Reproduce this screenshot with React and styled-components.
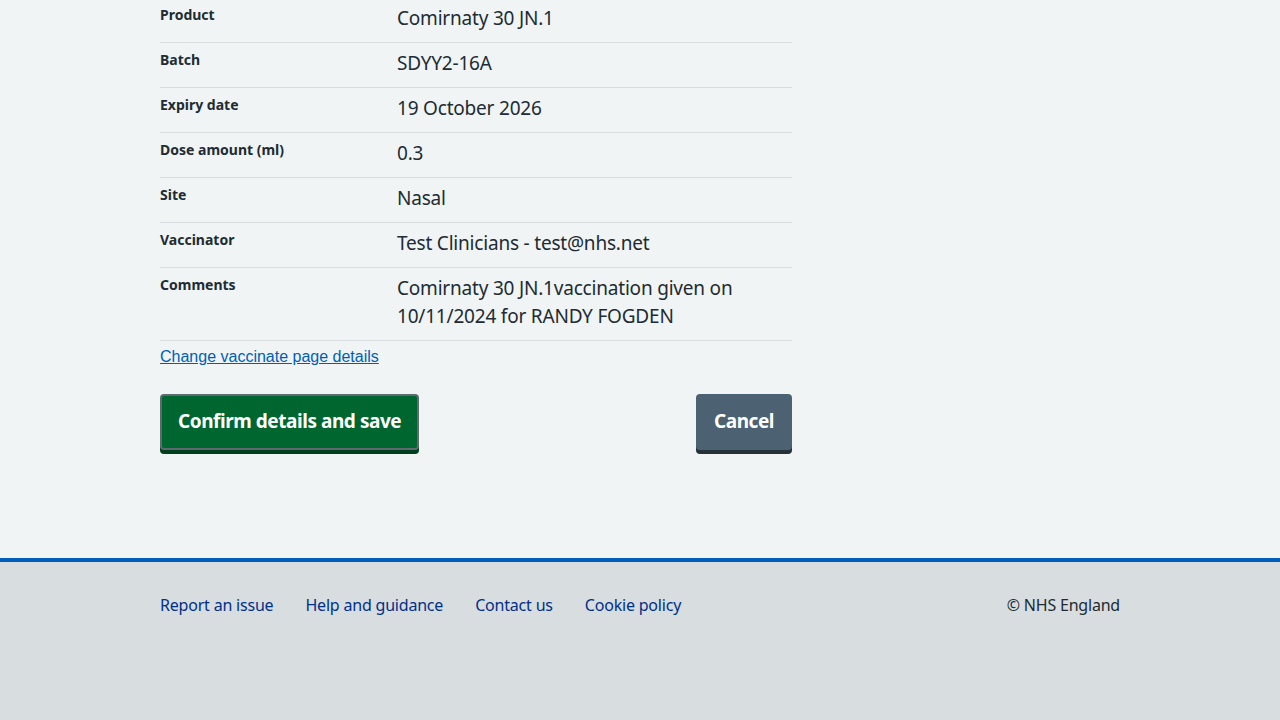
import React from 'react';
import styled, { createGlobalStyle } from 'styled-components';

const GlobalStyle = createGlobalStyle`
  html, body {
    margin: 0;
    padding: 0;
    background: #f0f4f5;
    font-family: "Noto Sans", Arial, sans-serif;
    color: #212b32;
  }
`;

const Page = styled.div`
  min-height: 720px;
  display: flex;
  flex-direction: column;
`;

const Main = styled.main`
  width: 960px;
  margin: 0 auto;
  margin-top: -2px;
  padding-bottom: 108px;
`;

const Content = styled.div`
  width: 632px;
`;

const List = styled.dl`
  margin: 0;
`;

const Row = styled.div`
  display: flex;
  border-bottom: 1px solid #d8dde0;
`;

const Key = styled.dt`
  width: 237px;
  flex-shrink: 0;
  padding: 7px 24px 9px 0;
  box-sizing: border-box;
  font-size: 14px;
  line-height: 20px;
  font-weight: 700;
`;

const Value = styled.dd`
  margin: 0;
  flex: 1;
  padding: 6px 24px 10px 0;
  font-size: 19px;
  line-height: 28px;
  letter-spacing: -0.2px;
`;

const ChangeLink = styled.a`
  display: inline-block;
  margin-top: 6px;
  font-family: "Liberation Sans", Arial, sans-serif;
  font-size: 16px;
  line-height: 20px;
  color: #005eb8;
  text-decoration: underline;
`;

const Actions = styled.div`
  display: flex;
  justify-content: space-between;
  margin-top: 27px;
`;

const Button = styled.button`
  font-family: inherit;
  font-size: 19px;
  font-weight: 700;
  line-height: 24px;
  letter-spacing: -0.45px;
  color: #fff;
  height: 56px;
  padding: 0 16px 3px;
  border-radius: 4px;
  cursor: pointer;
  background: ${p => (p.$secondary ? '#4c6272' : '#00662f')};
  border: 2px solid ${p => (p.$secondary ? 'transparent' : '#5d6b70')};
  box-shadow: 0 4px 0 ${p => (p.$secondary ? '#263139' : '#00401e')};
`;

const Footer = styled.footer`
  margin-top: auto;
  flex: 1;
  background: #d8dde0;
  border-top: 4px solid #005eb8;
`;

const FooterInner = styled.div`
  width: 960px;
  margin: 0 auto;
  padding-top: 31px;
  display: flex;
  justify-content: space-between;
  font-size: 16px;
  line-height: 24px;
  letter-spacing: -0.2px;
`;

const FooterLinks = styled.div`
  display: flex;
  gap: 32px;
`;

const FooterLink = styled.a`
  color: #003087;
  text-decoration: none;
`;

const Copyright = styled.span`
  color: #212b32;
`;

const rows = [
  ['Product', 'Comirnaty 30 JN.1'],
  ['Batch', 'SDYY2-16A'],
  ['Expiry date', '19 October 2026'],
  ['Dose amount (ml)', '0.3'],
  ['Site', 'Nasal'],
  ['Vaccinator', 'Test Clinicians - test@nhs.net'],
  ['Comments', 'Comirnaty 30 JN.1vaccination given on 10/11/2024 for RANDY FOGDEN'],
];

export default function App() {
  return (
    <Page>
      <GlobalStyle />
      <Main>
        <Content>
          <List>
            {rows.map(([k, v]) => (
              <Row key={k}>
                <Key>{k}</Key>
                <Value>{v}</Value>
              </Row>
            ))}
          </List>
          <ChangeLink href="#">Change vaccinate page details</ChangeLink>
          <Actions>
            <Button>Confirm details and save</Button>
            <Button $secondary>Cancel</Button>
          </Actions>
        </Content>
      </Main>
      <Footer>
        <FooterInner>
          <FooterLinks>
            <FooterLink href="#">Report an issue</FooterLink>
            <FooterLink href="#">Help and guidance</FooterLink>
            <FooterLink href="#">Contact us</FooterLink>
            <FooterLink href="#">Cookie policy</FooterLink>
          </FooterLinks>
          <Copyright>© NHS England</Copyright>
        </FooterInner>
      </Footer>
    </Page>
  );
}
